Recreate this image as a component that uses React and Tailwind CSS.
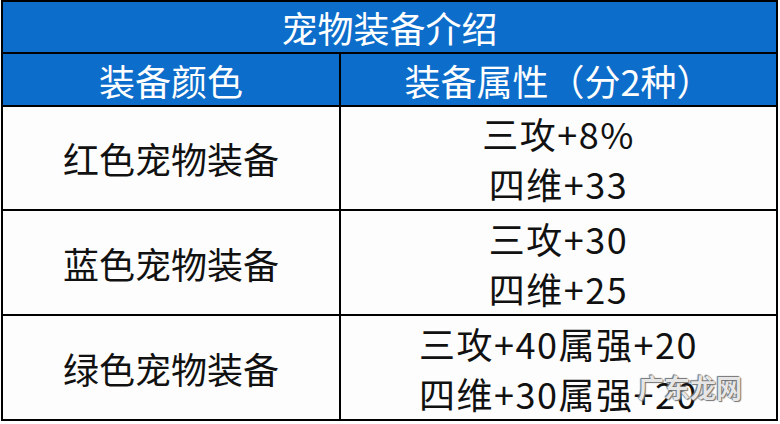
import React from "react";

const rows = [
  { name: "红色宠物装备", attrs: ["三攻+8%", "四维+33"] },
  { name: "蓝色宠物装备", attrs: ["三攻+30", "四维+25"] },
  { name: "绿色宠物装备", attrs: ["三攻+40属强+20", "四维+30属强+20"] },
];

const App = () => {
  return (
    <div className="w-[780px] h-[424px] bg-white pt-0 pl-[1px] font-['Noto_Sans_CJK_SC','Noto_Sans',sans-serif]">
      <div className="grid w-[777px] grid-cols-[336px_1fr] grid-rows-[50px_51px_102px_103px_103px] gap-[2px] bg-black p-[2px]">
        <div className="col-span-2 flex items-center justify-center bg-[#0d6dca] text-[36px] leading-none text-white">
          宠物装备介绍
        </div>
        <div className="flex items-center justify-center bg-[#0d6dca] text-[36px] leading-none text-white">
          装备颜色
        </div>
        <div className="flex items-center justify-center bg-[#0d6dca] text-[36px] leading-none text-white">
          装备属性（分2种）
        </div>
        {rows.map((row, i) => (
          <React.Fragment key={row.name}>
            <div className="flex items-center justify-center bg-[#fdfdfd] text-[36px] leading-none text-[#111]">
              {row.name}
            </div>
            <div className="relative flex flex-col items-center justify-center bg-[#fdfdfd] text-[36px] leading-[50px] tracking-[1.5px] text-[#111]">
              {row.attrs.map((a) => (
                <div key={a}>{a}</div>
              ))}
              {i === 2 && (
                <span className="absolute right-[34px] top-[58px] text-[26px] font-bold leading-none tracking-normal text-white/85 [text-shadow:0_0_1px_#555,1px_1px_1px_#777,-1px_-1px_1px_#777]">
                  广东龙网
                </span>
              )}
            </div>
          </React.Fragment>
        ))}
      </div>
    </div>
  );
};

export default App;
